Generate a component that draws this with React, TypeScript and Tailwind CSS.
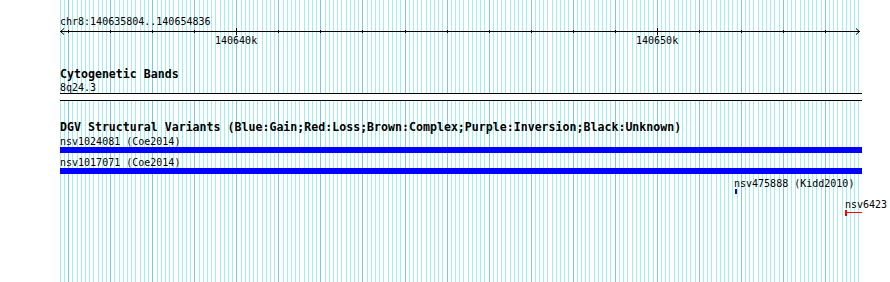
import React from "react";

const START = 140635804;
const END = 140654836;
const W = 800;
const toX = (bp: number) => ((bp - START) * W) / (END - START);

function Grid() {
  const lines: React.ReactNode[] = [];
  lines.push(<line key="s" x1={60.5} x2={60.5} y1={0} y2={282} stroke="#a0eeee" strokeWidth={1} />);
  for (let bp = Math.ceil(START / 100) * 100; bp <= END; bp += 100) {
    const x = Math.round(60 + toX(bp)) + 0.5;
    const major = bp % 1000 === 0;
    lines.push(
      <line key={bp} x1={x} x2={x} y1={0} y2={282} stroke={major ? "#80c4ea" : "#a0eeee"} strokeWidth={1} />
    );
  }
  return (
    <svg className="absolute inset-0" width={890} height={282}>
      {lines}
    </svg>
  );
}

function Ruler() {
  const ticks: React.ReactNode[] = [];
  for (let bp = Math.ceil(START / 1000) * 1000; bp <= END; bp += 1000) {
    const x = Math.round(toX(bp)) + 0.5;
    const big = bp % 10000 === 0;
    ticks.push(
      <line key={bp} x1={x} x2={x} y1={big ? 0 : 2} y2={big ? 7 : 5} stroke="#000" strokeWidth={1} />
    );
  }
  const labels = [140640000, 140650000];
  return (
    <div className="relative h-[19px]">
      <svg width={802} height={8} className="block">
        <line x1={0} x2={800} y1={3.5} y2={3.5} stroke="#000" strokeWidth={1} />
        <polyline points="4,0.5 0.5,3.5 4,6.5" fill="none" stroke="#000" strokeWidth={1} />
        <polyline points="796,0.5 799.5,3.5 796,6.5" fill="none" stroke="#000" strokeWidth={1} />
        {ticks}
      </svg>
      {labels.map((bp) => (
        <span
          key={bp}
          className="absolute top-[6px] leading-[13px] text-[10px] whitespace-nowrap"
          style={{ left: Math.round(toX(bp)) - 21 }}
        >
          {bp / 1000}k
        </span>
      ))}
    </div>
  );
}

export default function App() {
  return (
    <div className="relative w-[890px] h-[282px] overflow-hidden bg-white text-black font-['DejaVu_Sans_Mono',monospace]">
      <Grid />
      <div className="relative flex flex-col pl-[60px]">
        <div className="mt-[15px] h-[13px] leading-[13px] text-[10px]">chr8:140635804..140654836</div>
        <Ruler />
        <div className="mt-[21px] h-[13px] leading-[13px] text-[11.6px] font-bold">Cytogenetic Bands</div>
        <div className="h-[12px] leading-[13px] text-[10px]">8q24.3</div>
        <div className="h-[8px] w-[802px] border-y border-black bg-white" />
        <div className="mt-[20px] h-[13px] leading-[13px] text-[11.6px] font-bold whitespace-nowrap">
          DGV Structural Variants (Blue:Gain;Red:Loss;Brown:Complex;Purple:Inversion;Black:Unknown)
        </div>
        <div className="mt-[1px] h-[12px] leading-[13px] text-[10px]">nsv1024081 (Coe2014)</div>
        <div className="h-[6px] w-[802px] bg-[#0000ff]" />
        <div className="mt-[3px] h-[12px] leading-[13px] text-[10px]">nsv1017071 (Coe2014)</div>
        <div className="h-[6px] w-[802px] bg-[#0000ff]" />
        <div className="mt-[3px] ml-[674px] h-[12px] leading-[13px] text-[10px] whitespace-nowrap">nsv475888 (Kidd2010)</div>
        <div className="ml-[675px] h-[5px] w-[2px] bg-[#0000ff]" />
        <div className="mt-[4px] ml-[785px] h-[12px] leading-[13px] text-[10px] whitespace-nowrap">nsv6423</div>
        <svg width={18} height={6} className="ml-[785px] block">
          <rect x={0} y={0} width={2} height={6} fill="#ff0000" />
          <line x1={0} x2={17} y1={2.5} y2={2.5} stroke="#ff0000" strokeWidth={1} />
        </svg>
      </div>
    </div>
  );
}
